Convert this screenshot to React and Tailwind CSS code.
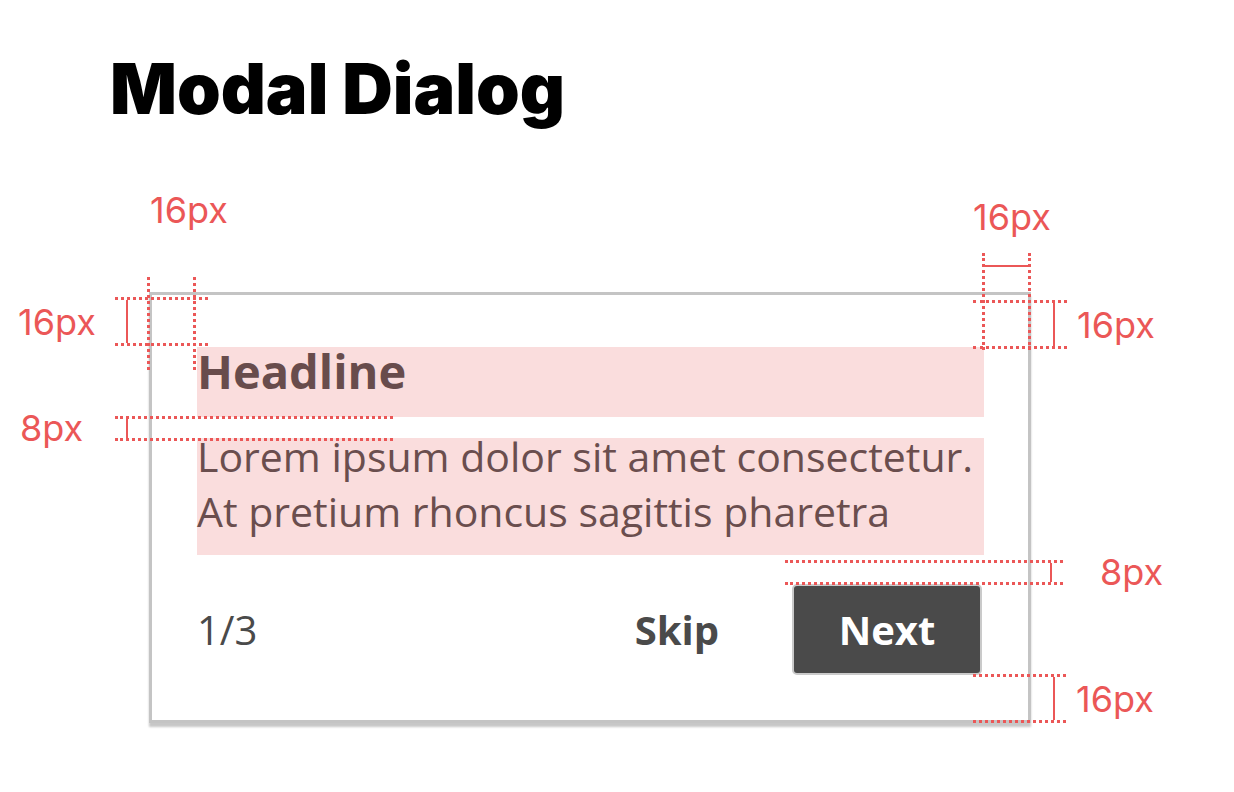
const label = "text-[36px] leading-[36px] text-[#eb5757] font-['Inter',sans-serif] whitespace-nowrap";
const bar = "w-[2px] self-stretch bg-[#eb5757]";
const rowGuide = "flex border-y-[3px] border-dotted border-[#eb5757]";
const colGuide = "border-x-[3px] border-dotted border-[#eb5757]";

// measurement overlays drawn on top of the dialog
function Annotations() {
  return (
    <>
      {/* top-left: horizontal padding */}
      <div className="absolute left-[147px] top-[192px] flex flex-col">
        <span className={`${label} ml-[3px]`}>16px</span>
        <div className={`${colGuide} mt-[49px] w-[49px] h-[93px]`} />
      </div>

      {/* left: top padding */}
      <div className="absolute left-[18px] top-[297px] flex items-center">
        <span className={`${label} w-[97px]`}>16px</span>
        <div className={`${rowGuide} w-[93px] h-[49px] pl-[11px]`}>
          <div className={bar} />
        </div>
      </div>

      {/* left: gap headline / body */}
      <div className="absolute left-[20px] top-[410px] flex items-center">
        <span className={`${label} w-[95px]`}>8px</span>
        <div className={`${rowGuide} w-[278px] h-[25px] pl-[11px]`}>
          <div className={bar} />
        </div>
      </div>

      {/* top-right: horizontal padding */}
      <div className="absolute left-[973px] top-[199px] flex flex-col">
        <span className={label}>16px</span>
        <div className={`${colGuide} mt-[18px] ml-[9px] w-[49px] h-[97px] pt-[12px]`}>
          <div className="h-[2px] bg-[#eb5757]" />
        </div>
      </div>

      {/* right: top padding */}
      <div className="absolute left-[973px] top-[300px] flex items-center gap-[10px]">
        <div className={`${rowGuide} w-[94px] h-[49px] pl-[80px]`}>
          <div className={bar} />
        </div>
        <span className={label}>16px</span>
      </div>

      {/* right: gap body / buttons */}
      <div className="absolute left-[785px] top-[554px] flex items-center gap-[37px]">
        <div className={`${rowGuide} w-[278px] h-[25px] pl-[265px]`}>
          <div className={bar} />
        </div>
        <span className={label}>8px</span>
      </div>

      {/* right: bottom padding */}
      <div className="absolute left-[973px] top-[674px] flex items-center gap-[10px]">
        <div className={`${rowGuide} w-[93px] h-[49px] pl-[80px]`}>
          <div className={bar} />
        </div>
        <span className={label}>16px</span>
      </div>
    </>
  );
}

export default function App() {
  return (
    <div className="relative w-[1234px] h-[792px] bg-white overflow-hidden">
      <h1 className="pl-[110px] pt-[54px] text-[70px] leading-[70px] font-black text-black font-['Inter',sans-serif]">
        Modal Dialog
      </h1>

      {/* Modal */}
      <div className="ml-[149px] mt-[168px] w-[882px] border-[3px] border-[#c4c4c4] bg-white pt-[52px] pl-[45px] pr-[44px] pb-[45px] shadow-[0_4px_2px_rgba(0,0,0,0.22)] font-['Open_Sans',sans-serif]">
        <div className="h-[70px] bg-[#fadddd] text-[47px] leading-[48px] font-bold text-[#684c4c]">
          Headline
        </div>
        <div className="mt-[21px] h-[117px] bg-[#fadddd] flex flex-col">
          <p className="-mt-[9px] text-[41px] leading-[55px] text-[#6a4e4e]">
            Lorem ipsum dolor sit amet consectetur.
            <br />
            At pretium rhoncus sagittis pharetra
          </p>
        </div>
        <div className="mt-[29px] flex items-center h-[91px]">
          <span className="text-[40px] text-[#4a4a4a]">1/3</span>
          <div className="ml-auto flex items-center gap-[73px]">
            <button className="text-[40px] font-bold text-[#4a4a4a]">Skip</button>
            <button className="mr-[2px] w-[190px] h-[91px] rounded-[5px] border-2 border-[#cacaca] bg-[#4a4a4a] text-[40px] font-bold text-white flex items-center justify-center">
              Next
            </button>
          </div>
        </div>
      </div>

      <Annotations />
    </div>
  );
}
